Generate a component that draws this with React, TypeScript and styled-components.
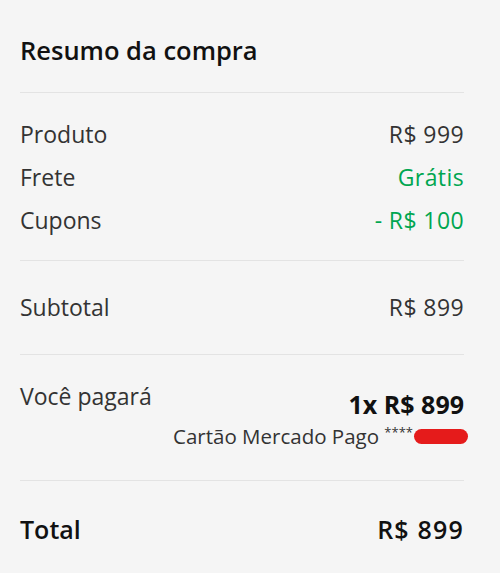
import styled, { createGlobalStyle } from 'styled-components';

const GlobalStyle = createGlobalStyle`
  html, body {
    margin: 0;
    padding: 0;
    background: #f5f5f5;
  }
  body {
    font-family: "Open Sans", "Liberation Sans", sans-serif;
    color: #333;
  }
`;

interface LineProps {
  label: string;
  value: string;
  green?: boolean;
}

const Line = ({ label, value, green }: LineProps) => (
  <Row>
    <Label>{label}</Label>
    <Value $green={green}>{value}</Value>
  </Row>
);

const App = () => {
  return (
    <>
      <GlobalStyle />
      <Summary>
        <Title>Resumo da compra</Title>
        <Section $top={29} $bottom={28}>
          <Line label="Produto" value="R$ 999" />
          <Line label="Frete" value="Grátis" green />
          <Line label="Cupons" value="- R$ 100" green />
        </Section>
        <Section $top={34} $bottom={35}>
          <Line label="Subtotal" value="R$ 899" />
        </Section>
        <Section $top={29} $bottom={33}>
          <PayRow>
            <Label>Você pagará</Label>
            <PayDetails>
              <Installment>1x R$ 899</Installment>
              <Card>
                Cartão Mercado Pago <Stars>****</Stars>
                <Redacted />
              </Card>
            </PayDetails>
          </PayRow>
        </Section>
        <Section $top={36} $bottom={30}>
          <Row>
            <TotalText>Total</TotalText>
            <TotalText $wide>R$ 899</TotalText>
          </Row>
        </Section>
      </Summary>
    </>
  );
};

const Summary = styled.div`
  width: 444px;
  padding: 36px 36px 0 20px;
`;

const Title = styled.h2`
  margin: 0;
  padding-bottom: 28px;
  font-size: 25.5px;
  line-height: 28px;
  font-weight: 600;
  color: #111;
`;

const Section = styled.div<{ $top: number; $bottom: number }>`
  display: flex;
  flex-direction: column;
  gap: 19px;
  border-top: 1px solid #e3e3e3;
  padding-top: ${(p) => p.$top}px;
  padding-bottom: ${(p) => p.$bottom}px;
`;

const Row = styled.div`
  display: flex;
  justify-content: space-between;
  align-items: center;
  height: 24px;
`;

const Label = styled.span`
  font-size: 23px;
  line-height: 24px;
  color: #333;
`;

const Value = styled.span<{ $green?: boolean }>`
  font-size: 23px;
  line-height: 24px;
  letter-spacing: 0.4px;
  color: ${(p) => (p.$green ? '#00a650' : '#333')};
`;

const PayRow = styled.div`
  display: flex;
  justify-content: space-between;
  align-items: flex-start;
`;

const PayDetails = styled.div`
  display: flex;
  flex-direction: column;
  align-items: flex-end;
  padding-top: 5px;
  gap: 6px;
`;

const Installment = styled.span`
  font-size: 25px;
  line-height: 30px;
  font-weight: 700;
  color: #111;
`;

const Card = styled.span`
  display: flex;
  align-items: center;
  font-size: 20.5px;
  line-height: 22px;
  color: #333;
  white-space: pre;
`;

const Stars = styled.span`
  font-size: 13px;
  line-height: 14px;
  align-self: flex-start;
`;

const Redacted = styled.span`
  width: 54px;
  height: 15px;
  border-radius: 8px;
  background: #e51b1b;
  margin-right: -4px;
  margin-left: 1px;
`;

const TotalText = styled.span<{ $wide?: boolean }>`
  font-size: 25px;
  line-height: 24px;
  font-weight: 600;
  letter-spacing: ${(p) => (p.$wide ? '1.2px' : '0')};
  color: #111;
`;

export default App;
